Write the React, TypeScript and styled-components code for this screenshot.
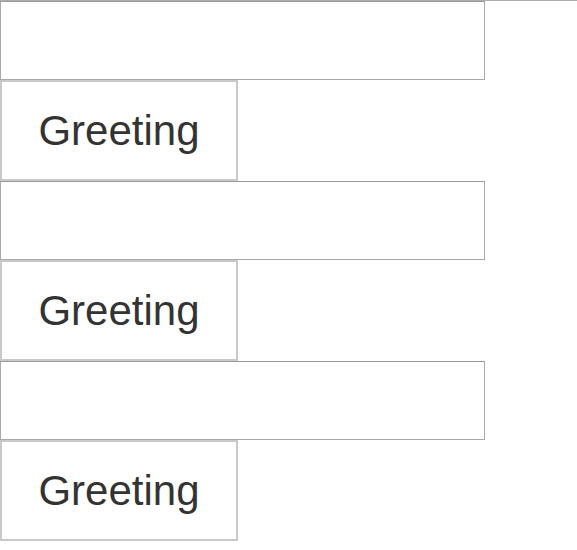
import React from "react";
import styled, { createGlobalStyle } from "styled-components";

const Global = createGlobalStyle`
  html, body { margin: 0; padding: 0; background: #fff; }
  body { font-family: "Liberation Sans", Arial, sans-serif; }
`;

const Page = styled.div`
  border-top: 1px solid #acacac;
  display: flex;
  flex-direction: column;
  align-items: flex-start;
`;

const Group = styled.div`
  display: flex;
  flex-direction: column;
  align-items: flex-start;
`;

const TextInput = styled.input`
  box-sizing: border-box;
  width: 485px;
  height: 79px;
  margin: 0;
  border: 1px solid #a9a9a9;
  border-top-color: #9a9a9a;
  background: #fff;
  font-family: "Liberation Sans", Arial, sans-serif;
  font-size: 40px;
  padding: 0 8px;
  outline: none;
`;

const GreetButton = styled.button`
  box-sizing: border-box;
  width: 238px;
  height: 101px;
  margin: 0;
  border: 2px solid #c9c9c9;
  background: #fff;
  color: #333;
  font-family: "Liberation Sans", Arial, sans-serif;
  font-size: 42px;
  padding: 0;
  cursor: pointer;
`;

export default function App() {
  return (
    <>
      <Global />
      <Page>
        {[0, 1, 2].map((i) => (
          <Group key={i}>
            <TextInput type="text" />
            <GreetButton>Greeting</GreetButton>
          </Group>
        ))}
      </Page>
    </>
  );
}
